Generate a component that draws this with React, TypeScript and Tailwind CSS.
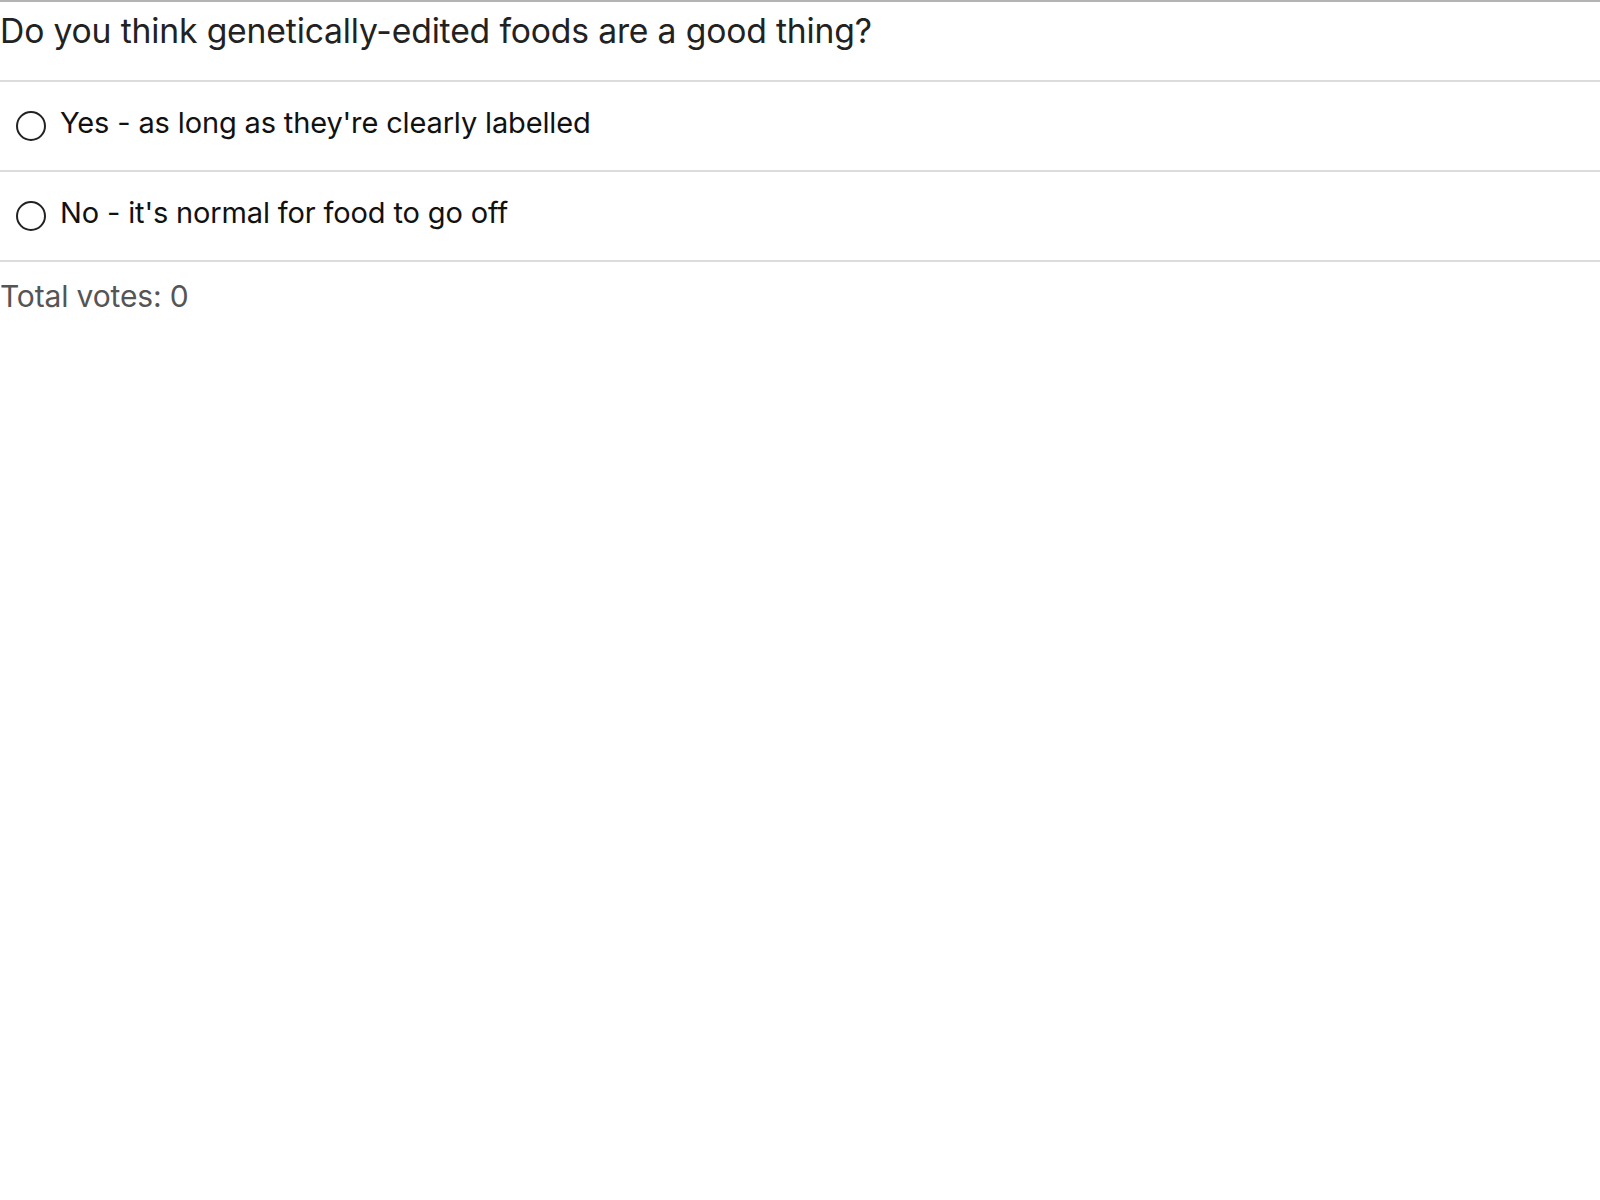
import { useState } from "react";

const options = [
  { id: "yes", label: "Yes - as long as they're clearly labelled" },
  { id: "no", label: "No - it's normal for food to go off" },
];

export default function App() {
  const [choice, setChoice] = useState("");

  return (
    <div className="bg-white min-h-screen font-['Inter',sans-serif]">
      <div className="border-t-2 border-[#b3b3b3]">
        <h2 className="h-[80px] pt-[9px] text-[33.7px] leading-[40px] text-[#222] tracking-[-0.005em] border-b-2 border-[#dcdcdc]">
          Do you think genetically-edited foods are a good thing?
        </h2>
        {options.map((o) => (
          <label
            key={o.id}
            className="flex items-center h-[90px] pl-[16px] border-b-2 border-[#dcdcdc] cursor-pointer"
          >
            <input
              type="radio"
              name="poll"
              checked={choice === o.id}
              onChange={() => setChoice(o.id)}
              className="appearance-none shrink-0 w-[30px] h-[30px] rounded-full border-2 border-[#222] checked:bg-[#222] mr-[14px]"
            />
            <span className="pb-[6px] text-[29px] text-[#111] tracking-[-0.005em]">{o.label}</span>
          </label>
        ))}
        <p className="pt-[14px] text-[30px] leading-[40px] text-[#555] tracking-[-0.005em]">
          Total votes: 0
        </p>
      </div>
    </div>
  );
}
